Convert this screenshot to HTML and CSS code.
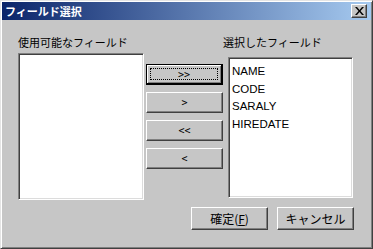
FILE: index.html
```html
<!DOCTYPE html>
<html lang="ja">
<head>
    <meta charset="UTF-8">
    <title>フィールド選択</title>
    <link rel="stylesheet" href="styles.css">
</head>
<body>
    <div class="window">
        <div class="titlebar">
            <span class="title">フィールド選択</span>
            <span class="close">
                <svg width="9" height="8" viewBox="0 0 9 8">
                    <path d="M0 0h2l2.5 3 2.5-3h2l-3.5 4 3.5 4h-2l-2.5-3-2.5 3h-2l3.5-4z" fill="#000"/>
                </svg>
            </span>
        </div>

        <div class="content">
            <div class="columns">
                <!-- available fields -->
                <div class="col left">
                    <div class="label">使用可能なフィールド</div>
                    <div class="list list-left"></div>
                </div>

                <!-- move buttons -->
                <div class="col middle">
                    <button class="btn move focused"><span>&gt;&gt;</span></button>
                    <button class="btn move"><span>&gt;</span></button>
                    <button class="btn move"><span>&lt;&lt;</span></button>
                    <button class="btn move"><span>&lt;</span></button>
                </div>

                <!-- selected fields -->
                <div class="col right">
                    <div class="label">選択したフィールド</div>
                    <div class="list list-right">
                        <div class="item">NAME</div>
                        <div class="item">CODE</div>
                        <div class="item">SARALY</div>
                        <div class="item">HIREDATE</div>
                    </div>
                </div>
            </div>

            <div class="actions">
                <button class="btn action">確定(<u>F</u>)</button>
                <button class="btn action">キャンセル</button>
            </div>
        </div>
    </div>
</body>
</html>
```

FILE: styles.css
```css
body {
    margin: 0;
    background-color: #c6c6c6;
    font-family: "Noto Sans CJK JP", "Liberation Sans", sans-serif;
}

.window {
    width: 373px;
    height: 249px;
    box-sizing: border-box;
    background-color: #c6c6c6;
    border-top: 1px solid #e4e4e4;
    border-left: 1px solid #e4e4e4;
    border-right: 1px solid #404040;
    border-bottom: 1px solid #404040;
    box-shadow: inset 1px 1px 0 #ffffff, inset -1px -1px 0 #808080;
    padding: 1px;
    display: flex;
    flex-direction: column;
}

.titlebar {
    height: 18px;
    background: linear-gradient(to right, #0a246a, #a6caf0);
    display: flex;
    align-items: center;
    justify-content: space-between;
    padding: 0 4px 0 3px;
}

.title {
    color: white;
    font-weight: bold;
    font-size: 11px;
    line-height: 18px;
}

.close {
    width: 14px;
    height: 12px;
    background-color: #c6c6c6;
    border-top: 1px solid #ffffff;
    border-left: 1px solid #ffffff;
    border-right: 1px solid #404040;
    border-bottom: 1px solid #404040;
    box-shadow: inset -1px -1px 0 #808080;
    display: flex;
    align-items: center;
    justify-content: center;
}

.content {
    flex: 1;
    padding: 15px 17px 0 16px;
}

.columns {
    display: flex;
}

.label {
    font-size: 11px;
    line-height: 14px;
    height: 14px;
    color: #000;
    white-space: nowrap;
}

.list {
    background: white;
    box-sizing: border-box;
    border-top: 1px solid #808080;
    border-left: 1px solid #808080;
    border-right: 1px solid #ffffff;
    border-bottom: 1px solid #ffffff;
    box-shadow: inset 1px 1px 0 #404040, inset -1px -1px 0 #dcdcdc;
}

.list-left {
    width: 126px;
    height: 147px;
    margin-top: 4px;
}

.col.left {
    margin-right: 2px;
}

.col.middle {
    width: 77px;
    padding-top: 29px;
    display: flex;
    flex-direction: column;
    gap: 7px;
}

.list-right {
    width: 125px;
    height: 141px;
    margin-top: 8px;
    margin-left: 5px;
    padding: 5px 0 0 3px;
}

.item {
    font-family: "Liberation Sans", Arial, sans-serif;
    font-size: 11.5px;
    line-height: 17.7px;
    color: #000;
}

.btn {
    box-sizing: border-box;
    background-color: #c6c6c6;
    border-top: 1px solid #ffffff;
    border-left: 1px solid #ffffff;
    border-right: 1px solid #404040;
    border-bottom: 1px solid #404040;
    box-shadow: inset -1px -1px 0 #808080;
    font-family: "Noto Sans CJK JP", "Liberation Sans", sans-serif;
    color: #000;
    padding: 0;
    margin: 0;
}

.move {
    width: 77px;
    height: 21px;
    font-size: 10px;
    font-family: "DejaVu Sans Mono", monospace;
    display: flex;
    align-items: center;
    justify-content: center;
}

.move.focused {
    border-right: 2px solid #000;
    border-bottom: 2px solid #000;
    border-top: 1px solid #000;
    border-left: 1px solid #000;
    box-shadow: inset 1px 1px 0 #ffffff, inset -1px -1px 0 #808080;
    position: relative;
}

.move.focused::after {
    content: "";
    position: absolute;
    left: 3px;
    top: 3px;
    right: 3px;
    bottom: 3px;
    border: 1px dotted #000;
}

.actions {
    display: flex;
    justify-content: flex-end;
    gap: 9px;
    margin-top: 7px;
}

.action {
    width: 77px;
    height: 23px;
    font-size: 12px;
}
```
